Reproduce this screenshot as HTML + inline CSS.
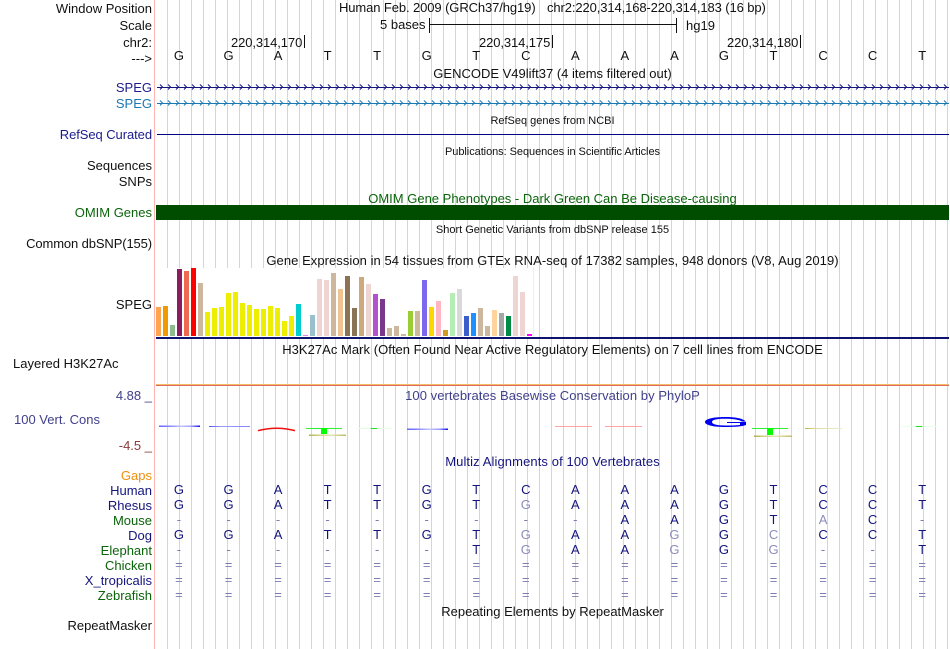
<!DOCTYPE html>
<html>
<head>
<meta charset="utf-8">
<style>
html,body{margin:0;padding:0;background:#fff}
#p{position:relative;width:950px;height:649px;overflow:hidden;background:#fff;font-family:"Liberation Sans",sans-serif;font-size:13px;color:#111}
#g{position:absolute;left:0;top:0;width:950px;height:649px;background-image:repeating-linear-gradient(to right,#d0d0ff 0,#d0d0ff 1px,transparent 1px,transparent 12px);background-position:167px 0;background-repeat:no-repeat;background-size:783px 649px}
#r{position:absolute;left:154px;top:0;width:1px;height:649px;background:#ffb4b4}
svg{position:absolute;left:0;top:0}
.t{position:absolute;line-height:14px;white-space:nowrap;margin-top:1px}
.l{position:absolute;right:798px;line-height:14px;white-space:nowrap;text-align:right;margin-top:1px}
.c{position:absolute;left:156px;width:793px;text-align:center;line-height:14px;white-space:nowrap;margin-top:1px}
.s{font-size:11px}
.row{position:absolute;left:154.2px;display:flex;line-height:14px;color:#14147e}
.row span{display:block;width:49.55px;text-align:center}
.row i{font-style:normal;color:#8c8cbc}
.d{color:#7c7cb0!important}
</style>
</head>
<body>
<div id="p">
<div id="g"></div>
<div id="r"></div>

<svg width="950" height="649" xmlns="http://www.w3.org/2000/svg">
<defs>
<pattern id="c1" x="157" y="84" width="8" height="6" patternUnits="userSpaceOnUse"><path d="M3 .5L5.5 3L3 5.5" fill="none" stroke="#14147e" stroke-width="1"/></pattern>
<pattern id="c2" x="157" y="100" width="8" height="6" patternUnits="userSpaceOnUse"><path d="M3 .5L5.5 3L3 5.5" fill="none" stroke="#1a78b4" stroke-width="1"/></pattern>
<linearGradient id="b1"><stop offset="0" stop-color="#6a6aff"/><stop offset=".2" stop-color="#7c7cff"/><stop offset=".55" stop-color="#c4c4ff"/><stop offset=".8" stop-color="#9a9aff"/><stop offset="1" stop-color="#1010f0"/></linearGradient>
<linearGradient id="b2"><stop offset="0" stop-color="#5050ff"/><stop offset=".3" stop-color="#9c9cff"/><stop offset="1" stop-color="#8484ff"/></linearGradient>
<linearGradient id="ol"><stop offset="0" stop-color="#b0b048"/><stop offset=".25" stop-color="#d0d088"/><stop offset=".6" stop-color="#e4e4b8"/><stop offset="1" stop-color="#bcbc60"/></linearGradient>
<linearGradient id="ol2"><stop offset="0" stop-color="#c0b440"/><stop offset=".3" stop-color="#dcdca0"/><stop offset="1" stop-color="#ecECcc"/></linearGradient>
<linearGradient id="gg"><stop offset="0" stop-color="#f0fff0"/><stop offset=".4" stop-color="#dcffdc"/><stop offset=".42" stop-color="#20e020"/><stop offset=".58" stop-color="#20e020"/><stop offset=".6" stop-color="#dcffdc"/><stop offset="1" stop-color="#f0fff0"/></linearGradient>
</defs>
<rect x="157" y="87" width="792" height="1" fill="#14147e"/>
<rect x="157" y="84" width="792" height="6" fill="url(#c1)"/>
<rect x="157" y="103" width="792" height="1" fill="#1a78b4"/>
<rect x="157" y="100" width="792" height="6" fill="url(#c2)"/>
<rect x="157" y="134" width="792" height="1" fill="#000080"/>
<rect x="156" y="205" width="793" height="15" fill="#004d00"/>

<!-- scale + ticks -->
<rect x="429" y="18" width="1" height="15" fill="#111"/>
<rect x="429" y="24" width="248" height="1" fill="#111"/>
<rect x="676" y="18" width="1" height="15" fill="#111"/>
<rect x="304" y="35" width="1" height="13" fill="#111"/>
<rect x="552" y="35" width="1" height="13" fill="#111"/>
<rect x="800" y="35" width="1" height="13" fill="#111"/>

<!-- GTEx -->
<rect x="156" y="268" width="378" height="69" fill="#fff"/>
<rect x="533" y="268" width="1" height="69" fill="#ececf6"/>
<g>
<rect x="156" y="307" width="5" height="29" fill="#ffa54f"/>
<rect x="163" y="306" width="5" height="30" fill="#ee9a00"/>
<rect x="170" y="325" width="5" height="11" fill="#8fbc8f"/>
<rect x="177" y="269" width="5" height="67" fill="#8b1c62"/>
<rect x="184" y="271" width="5" height="65" fill="#ee6a50"/>
<rect x="191" y="268" width="5" height="68" fill="#ff0000"/>
<rect x="198" y="283" width="5" height="53" fill="#cdb79e"/>
<rect x="205" y="312" width="5" height="24" fill="#eeee00"/>
<rect x="212" y="308" width="5" height="28" fill="#eeee00"/>
<rect x="219" y="307" width="5" height="29" fill="#eeee00"/>
<rect x="226" y="293" width="5" height="43" fill="#eeee00"/>
<rect x="233" y="292" width="5" height="44" fill="#eeee00"/>
<rect x="240" y="303" width="5" height="33" fill="#eeee00"/>
<rect x="247" y="305" width="5" height="31" fill="#eeee00"/>
<rect x="254" y="309" width="5" height="27" fill="#eeee00"/>
<rect x="261" y="309" width="5" height="27" fill="#eeee00"/>
<rect x="268" y="306" width="5" height="30" fill="#eeee00"/>
<rect x="275" y="308" width="5" height="28" fill="#eeee00"/>
<rect x="282" y="321" width="5" height="15" fill="#eeee00"/>
<rect x="289" y="316" width="5" height="20" fill="#eeee00"/>
<rect x="296" y="304" width="5" height="32" fill="#00cdcd"/>
<rect x="303" y="335" width="5" height="1" fill="#ee82ee"/>
<rect x="310" y="315" width="5" height="21" fill="#9ac0cd"/>
<rect x="317" y="279" width="5" height="57" fill="#eed5d2"/>
<rect x="324" y="280" width="5" height="56" fill="#eed5d2"/>
<rect x="331" y="273" width="5" height="63" fill="#cdb79e"/>
<rect x="338" y="289" width="5" height="47" fill="#eec591"/>
<rect x="345" y="276" width="5" height="60" fill="#8b7355"/>
<rect x="352" y="308" width="5" height="28" fill="#8b7355"/>
<rect x="359" y="277" width="5" height="59" fill="#cdaa7d"/>
<rect x="366" y="284" width="5" height="52" fill="#eed5d2"/>
<rect x="373" y="294" width="5" height="42" fill="#b452cd"/>
<rect x="380" y="299" width="5" height="37" fill="#7a378b"/>
<rect x="387" y="328" width="5" height="8" fill="#cdb79e"/>
<rect x="394" y="326" width="5" height="10" fill="#cdb79e"/>
<rect x="401" y="334" width="5" height="2" fill="#cdb79e"/>
<rect x="408" y="311" width="5" height="25" fill="#9acd32"/>
<rect x="415" y="311" width="5" height="25" fill="#cdb79e"/>
<rect x="422" y="280" width="5" height="56" fill="#7b68ee"/>
<rect x="429" y="307" width="5" height="29" fill="#ffd700"/>
<rect x="436" y="301" width="5" height="35" fill="#ffb6c1"/>
<rect x="443" y="330" width="5" height="6" fill="#cd9b1d"/>
<rect x="450" y="293" width="5" height="43" fill="#b4eeb4"/>
<rect x="457" y="289" width="5" height="47" fill="#d9d9d9"/>
<rect x="464" y="316" width="5" height="20" fill="#3a5fcd"/>
<rect x="471" y="313" width="5" height="23" fill="#1e90ff"/>
<rect x="478" y="308" width="5" height="28" fill="#cdb79e"/>
<rect x="485" y="326" width="5" height="10" fill="#cdb79e"/>
<rect x="492" y="310" width="5" height="26" fill="#ffd39b"/>
<rect x="499" y="313" width="5" height="23" fill="#a6a6a6"/>
<rect x="506" y="316" width="5" height="20" fill="#008b45"/>
<rect x="513" y="276" width="5" height="60" fill="#eed5d2"/>
<rect x="520" y="292" width="5" height="44" fill="#eed5d2"/>
<rect x="527" y="334" width="5" height="2" fill="#ff00ff"/>
</g>
<rect x="156" y="337" width="793" height="2" fill="#0c1470"/>

<!-- H3K27Ac baseline -->
<rect x="156" y="384" width="793" height="1" fill="#f2bd66"/>
<rect x="156" y="385" width="793" height="1" fill="#df6a5e"/>

<!-- PhyloP stretched letters -->
<rect x="159" y="425.5" width="41" height="1.5" fill="url(#b1)"/>
<rect x="209" y="426" width="41" height="1" fill="url(#b2)"/>
<path d="M258 430.6Q277 425.8 295 430.6" fill="none" stroke="#f01010" stroke-width="1.5"/>
<rect x="306" y="428" width="36" height="1" fill="#30f030"/>
<rect x="321" y="428" width="6" height="6" fill="#00ff00"/>
<rect x="309" y="434.5" width="37" height="1.5" fill="url(#ol)"/>
<rect x="356" y="428" width="36" height="1" fill="url(#gg)"/>
<rect x="407" y="428.5" width="41" height="1.5" fill="url(#b1)"/>
<rect x="555" y="426" width="37" height="1" fill="#ffa4a4"/>
<rect x="605" y="426" width="37" height="1" fill="#ffa4a4"/>
<path fill-rule="evenodd" fill="#0000f0" d="M746 421.5C742 418 735 417 725 417C713 417 705 419 705 422C705 425 713 427 725 427C735 427 742 426.5 746 425L746 422L727 422L727 423L740 423L740 425C735 425.5 730 425.5 725 425.5C716 425.5 712 424 712 422C712 420 716 418.8 725 418.8C733 418.8 738 419.5 742 421.5Z"/>
<rect x="752" y="428" width="36" height="1" fill="#30f030"/>
<rect x="767" y="428" width="6" height="7" fill="#00ff00"/>
<rect x="754" y="435.5" width="38" height="1.5" fill="url(#ol)"/>
<rect x="805" y="428" width="37" height="1" fill="url(#ol2)"/>
<rect x="901" y="426" width="36" height="1" fill="url(#gg)"/>
</svg>

<!-- left labels -->
<div class="l" style="top:1px">Window Position</div>
<div class="l" style="top:18px">Scale</div>
<div class="l" style="top:35px">chr2:</div>
<div class="l" style="top:51px">---&gt;</div>
<div class="l" style="top:80px;color:#1c1c8c">SPEG</div>
<div class="l" style="top:96px;color:#1a78b4">SPEG</div>
<div class="l" style="top:127px;color:#1c1c8c;letter-spacing:-.07px">RefSeq Curated</div>
<div class="l" style="top:158px">Sequences</div>
<div class="l" style="top:174px">SNPs</div>
<div class="l" style="top:205px;color:#0a640a">OMIM Genes</div>
<div class="l" style="top:236px;letter-spacing:-.12px">Common dbSNP(155)</div>
<div class="l" style="top:297px">SPEG</div>
<div class="t" style="left:13px;top:356px">Layered H3K27Ac</div>
<div class="l" style="top:388px;color:#40408c">4.88 _</div>
<div class="t" style="left:14px;top:412px;color:#40408c">100 Vert. Cons</div>
<div class="l" style="top:438px;color:#8b3a3a">-4.5 _</div>
<div class="l" style="top:468px;color:#f0900c">Gaps</div>
<div class="l" style="top:483px;color:#14147e">Human</div>
<div class="l" style="top:498px;color:#14147e">Rhesus</div>
<div class="l" style="top:513px;color:#0a640a">Mouse</div>
<div class="l" style="top:528px;color:#14147e">Dog</div>
<div class="l" style="top:543px;color:#0a640a">Elephant</div>
<div class="l" style="top:558px;color:#0a640a">Chicken</div>
<div class="l" style="top:573px;color:#14147e">X_tropicalis</div>
<div class="l" style="top:588px;color:#0a640a">Zebrafish</div>
<div class="l" style="top:618px">RepeatMasker</div>

<!-- header -->
<div class="t" style="left:339px;top:0;letter-spacing:-.1px">Human Feb. 2009 (GRCh37/hg19)</div>
<div class="t" style="left:547px;top:0;letter-spacing:-.11px">chr2:220,314,168-220,314,183 (16 bp)</div>
<div class="t" style="left:380px;top:17px">5 bases</div>
<div class="t" style="left:686px;top:18px">hg19</div>
<div class="t" style="left:231px;top:35px;letter-spacing:-.1px">220,314,170</div>
<div class="t" style="left:479px;top:35px;letter-spacing:-.1px">220,314,175</div>
<div class="t" style="left:727px;top:35px;letter-spacing:-.1px">220,314,180</div>

<div class="row" style="top:49px;color:#111"><span>G</span><span>G</span><span>A</span><span>T</span><span>T</span><span>G</span><span>T</span><span>C</span><span>A</span><span>A</span><span>A</span><span>G</span><span>T</span><span>C</span><span>C</span><span>T</span></div>

<!-- titles -->
<div class="c" style="top:66px">GENCODE V49lift37 (4 items filtered out)</div>
<div class="c s" style="top:113px">RefSeq genes from NCBI</div>
<div class="c s" style="top:144px;letter-spacing:-.06px">Publications: Sequences in Scientific Articles</div>
<div class="c" style="top:191px;color:#0a640a">OMIM Gene Phenotypes - Dark Green Can Be Disease-causing</div>
<div class="c s" style="top:222px">Short Genetic Variants from dbSNP release 155</div>
<div class="c" style="top:253px;letter-spacing:.055px">Gene Expression in 54 tissues from GTEx RNA-seq of 17382 samples, 948 donors (V8, Aug 2019)</div>
<div class="c" style="top:342px;letter-spacing:.035px">H3K27Ac Mark (Often Found Near Active Regulatory Elements) on 7 cell lines from ENCODE</div>
<div class="c" style="top:388px;color:#40408c;letter-spacing:.06px">100 vertebrates Basewise Conservation by PhyloP</div>
<div class="c" style="top:454px;color:#14147e;letter-spacing:.1px">Multiz Alignments of 100 Vertebrates</div>
<div class="c" style="top:604px">Repeating Elements by RepeatMasker</div>

<!-- alignments -->
<div class="row" style="top:483px"><span>G</span><span>G</span><span>A</span><span>T</span><span>T</span><span>G</span><span>T</span><span>C</span><span>A</span><span>A</span><span>A</span><span>G</span><span>T</span><span>C</span><span>C</span><span>T</span></div>
<div class="row" style="top:498px"><span>G</span><span>G</span><span>A</span><span>T</span><span>T</span><span>G</span><span>T</span><span><i>G</i></span><span>A</span><span>A</span><span>A</span><span>G</span><span>T</span><span>C</span><span>C</span><span>T</span></div>
<div class="row" style="top:513px"><span class="d">-</span><span class="d">-</span><span class="d">-</span><span class="d">-</span><span class="d">-</span><span class="d">-</span><span class="d">-</span><span class="d">-</span><span class="d">-</span><span>A</span><span>A</span><span>G</span><span>T</span><span><i>A</i></span><span>C</span><span class="d">-</span></div>
<div class="row" style="top:528px"><span>G</span><span>G</span><span>A</span><span>T</span><span>T</span><span>G</span><span>T</span><span><i>G</i></span><span>A</span><span>A</span><span><i>G</i></span><span>G</span><span><i>C</i></span><span>C</span><span>C</span><span>T</span></div>
<div class="row" style="top:543px"><span class="d">-</span><span class="d">-</span><span class="d">-</span><span class="d">-</span><span class="d">-</span><span class="d">-</span><span>T</span><span><i>G</i></span><span>A</span><span>A</span><span><i>G</i></span><span>G</span><span><i>G</i></span><span class="d">-</span><span class="d">-</span><span>T</span></div>
<div class="row" style="top:558px"><span class="d">=</span><span class="d">=</span><span class="d">=</span><span class="d">=</span><span class="d">=</span><span class="d">=</span><span class="d">=</span><span class="d">=</span><span class="d">=</span><span class="d">=</span><span class="d">=</span><span class="d">=</span><span class="d">=</span><span class="d">=</span><span class="d">=</span><span class="d">=</span></div>
<div class="row" style="top:573px"><span class="d">=</span><span class="d">=</span><span class="d">=</span><span class="d">=</span><span class="d">=</span><span class="d">=</span><span class="d">=</span><span class="d">=</span><span class="d">=</span><span class="d">=</span><span class="d">=</span><span class="d">=</span><span class="d">=</span><span class="d">=</span><span class="d">=</span><span class="d">=</span></div>
<div class="row" style="top:588px"><span class="d">=</span><span class="d">=</span><span class="d">=</span><span class="d">=</span><span class="d">=</span><span class="d">=</span><span class="d">=</span><span class="d">=</span><span class="d">=</span><span class="d">=</span><span class="d">=</span><span class="d">=</span><span class="d">=</span><span class="d">=</span><span class="d">=</span><span class="d">=</span></div>
</div>
</body>
</html>
